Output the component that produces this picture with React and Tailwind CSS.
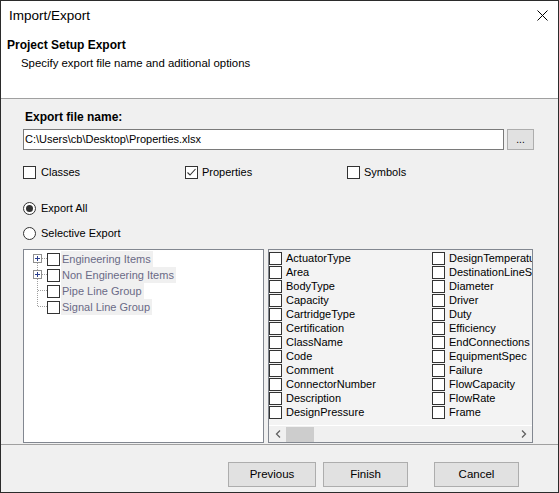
import React from 'react';

const FONT = { fontFamily: '"Liberation Sans", Arial, sans-serif' };

const COL1 = [
  'ActuatorType',
  'Area',
  'BodyType',
  'Capacity',
  'CartridgeType',
  'Certification',
  'ClassName',
  'Code',
  'Comment',
  'ConnectorNumber',
  'Description',
  'DesignPressure',
];

const COL2 = [
  'DesignTemperature',
  'DestinationLineSize',
  'Diameter',
  'Driver',
  'Duty',
  'Efficiency',
  'EndConnections',
  'EquipmentSpec',
  'Failure',
  'FlowCapacity',
  'FlowRate',
  'Frame',
];

const TREE = [
  { label: 'Engineering Items', kind: 'first' },
  { label: 'Non Engineering Items', kind: 'mid' },
  { label: 'Pipe Line Group', kind: 'leaf' },
  { label: 'Signal Line Group', kind: 'last' },
];

function Box({ checked }) {
  return (
    <span className="w-[13px] h-[13px] shrink-0 border border-[#333] bg-white flex items-center justify-center">
      {checked && (
        <svg width="11" height="11" viewBox="0 0 11 11">
          <polyline points="1.5,5.5 4,8 9.5,2" fill="none" stroke="#333" strokeWidth="1.1" />
        </svg>
      )}
    </span>
  );
}

function Radio({ on }) {
  return (
    <span className="w-[13px] h-[13px] shrink-0 rounded-full border border-[#333] bg-white flex items-center justify-center">
      {on && <span className="w-[7px] h-[7px] rounded-full bg-[#333]" />}
    </span>
  );
}

// dotted connector + plus box for tree rows
function Connector({ kind }) {
  const dot = { stroke: '#a0a0a0', strokeWidth: 1, strokeDasharray: '1 1' };
  const plus = kind === 'first' || kind === 'mid';
  return (
    <svg width="17" height="16" viewBox="0 0 17 16" className="shrink-0">
      {kind !== 'first' && <line x1="7.5" y1="0" x2="7.5" y2={plus ? 3 : kind === 'last' ? 8 : 16} {...dot} />}
      {kind === 'first' && <line x1="7.5" y1="12" x2="7.5" y2="16" {...dot} />}
      {kind === 'mid' && <line x1="7.5" y1="12" x2="7.5" y2="16" {...dot} />}
      <line x1={plus ? 12 : 8} y1="7.5" x2="17" y2="7.5" {...dot} />
      {plus && (
        <g>
          <rect x="3.5" y="3.5" width="8" height="8" fill="#fff" stroke="#909090" />
          <line x1="5" y1="7.5" x2="10" y2="7.5" stroke="#2a3f8f" />
          <line x1="7.5" y1="5" x2="7.5" y2="10" stroke="#2a3f8f" />
        </g>
      )}
    </svg>
  );
}

function Button({ children, w }) {
  return (
    <button className={`${w} h-[25px] bg-[#e1e1e1] border border-[#adadad] text-[11.5px] text-black`}>
      {children}
    </button>
  );
}

export default function App() {
  return (
    <div style={FONT} className="w-[559px] h-[493px] border border-[#2b2b2b] bg-[#f0f0f0] flex flex-col overflow-hidden text-black">
      {/* Title bar */}
      <div className="h-[29px] bg-white flex items-center justify-between pl-[8px] pr-[10px]">
        <span className="text-[13.5px] pt-[1px]">Import/Export</span>
        <svg width="11" height="11" viewBox="0 0 11 11">
          <line x1="0.5" y1="0.5" x2="10.5" y2="10.5" stroke="#000" strokeWidth="1" />
          <line x1="10.5" y1="0.5" x2="0.5" y2="10.5" stroke="#000" strokeWidth="1" />
        </svg>
      </div>

      {/* Header */}
      <div className="h-[69px] bg-white border-b border-[#a0a0a0] pl-[6px] pt-[7px]">
        <p className="text-[12px] font-bold leading-[16px]">Project Setup Export</p>
        <p className="text-[11.4px] leading-[16px] mt-[2px] pl-[14px]">Specify export file name and aditional options</p>
      </div>

      {/* Body */}
      <div className="flex-1 flex flex-col pl-[22px]">
        <p className="text-[12px] font-bold leading-[16px] mt-[10px] pl-[2px]">Export file name:</p>
        <div className="flex mt-[4px] gap-[3px]">
          <div className="w-[481px] h-[21px] bg-white border border-[#7a7a7a] text-[11px] leading-[19px] pl-[1px]">
            C:\Users\cb\Desktop\Properties.xlsx
          </div>
          <button className="w-[27px] h-[21px] bg-[#e1e1e1] border border-[#adadad] text-[10px] leading-[17px]">...</button>
        </div>

        <div className="grid grid-cols-[162px_162px_162px] mt-[14px] h-[16px] text-[11px]">
          <label className="flex items-center gap-[5px]"><Box /> Classes</label>
          <label className="flex items-center gap-[4px]"><Box checked /> Properties</label>
          <label className="flex items-center gap-[4px]"><Box /> Symbols</label>
        </div>

        <label className="flex items-center gap-[5px] mt-[20px] h-[16px] text-[11px]"><Radio on /> Export All</label>
        <label className="flex items-center gap-[5px] mt-[9px] h-[16px] text-[11px]"><Radio /> Selective Export</label>

        <div className="flex gap-[4px] mt-[8px]">
          {/* Tree */}
          <div className="w-[241px] h-[194px] bg-white border border-[#828790] pt-[1px] pl-[6px] text-[11px]">
            {TREE.map((t) => (
              <div key={t.label} className="flex items-center h-[16px]">
                <Connector kind={t.kind} />
                <Box />
                <span className="bg-[#f0f0f0] text-[#6a6a86] leading-[16px] pl-[1px] pr-[2px] ml-[1px]">{t.label}</span>
              </div>
            ))}
          </div>

          {/* Property list */}
          <div className="w-[265px] h-[194px] bg-[#f3f3f3] border border-[#828790] flex flex-col text-[11px]">
            <div className="flex-1 flex overflow-hidden pt-[1px]">
              {[COL1, COL2].map((col, i) => (
                <div key={i} className="w-[163px] shrink-0 flex flex-col">
                  {col.map((name) => (
                    <div key={name} className="flex items-center h-[14px] gap-[4px] whitespace-nowrap">
                      <Box />
                      <span>{name}</span>
                    </div>
                  ))}
                </div>
              ))}
            </div>
            <div className="h-[17px] bg-[#f0f0f0] border-t border-white flex items-center">
              <div className="w-[17px] h-full flex items-center justify-center">
                <svg width="6" height="8" viewBox="0 0 6 8"><polyline points="5,0.5 1.5,4 5,7.5" fill="none" stroke="#606060" strokeWidth="1.3" /></svg>
              </div>
              <div className="w-[28px] h-[15px] bg-[#cdcdcd]" />
              <div className="flex-1" />
              <div className="w-[17px] h-full flex items-center justify-center">
                <svg width="6" height="8" viewBox="0 0 6 8"><polyline points="1,0.5 4.5,4 1,7.5" fill="none" stroke="#606060" strokeWidth="1.3" /></svg>
              </div>
            </div>
          </div>
        </div>
      </div>

      {/* Footer */}
      <div className="h-[47px] border-t border-[#a0a0a0] flex items-start pt-[17px] pl-[227px] mb-[1px]">
        <Button w="w-[88px]">Previous</Button>
        <span className="w-[7px]" />
        <Button w="w-[85px]">Finish</Button>
        <span className="w-[26px]" />
        <Button w="w-[85px]">Cancel</Button>
      </div>
    </div>
  );
}
